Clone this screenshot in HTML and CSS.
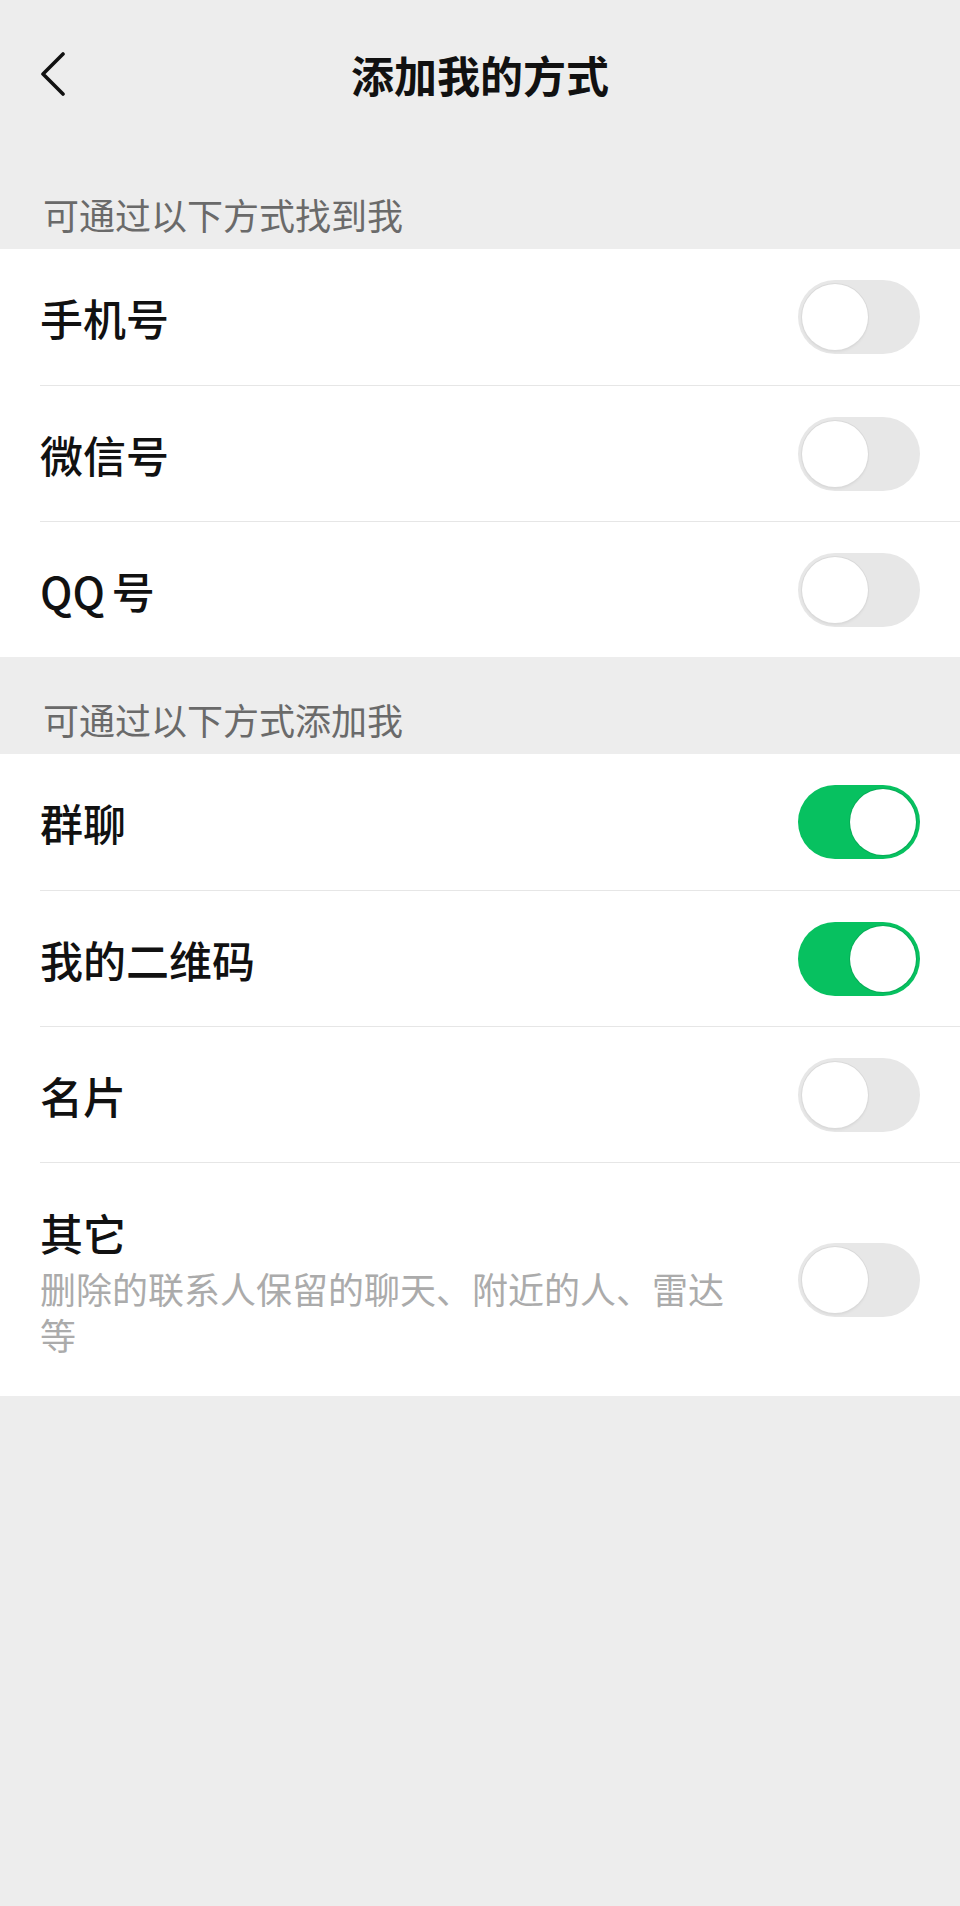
FILE: index.html
```html
<!DOCTYPE html>
<html lang="zh-CN">
<head>
    <meta charset="UTF-8">
    <meta name="viewport" content="width=device-width, initial-scale=1.0">
    <title>添加我的方式</title>
    <link rel="stylesheet" href="styles.css">
</head>
<body>

    <header class="nav-bar">
        <div class="nav-back">
            <svg width="26" height="44" viewBox="0 0 26 44" fill="none">
                <path d="M22 2 L2 22 L22 42" stroke="#111" stroke-width="3.6" stroke-linecap="round" stroke-linejoin="round"/>
            </svg>
        </div>
        <h1 class="nav-title">添加我的方式</h1>
        <div></div>
    </header>

    <div class="section-title">可通过以下方式找到我</div>
    <div class="card">
        <div class="row">
            <span class="label">手机号</span>
            <span class="switch"></span>
        </div>
        <div class="row">
            <span class="label">微信号</span>
            <span class="switch"></span>
        </div>
        <div class="row">
            <span class="label"><span class="latin">QQ</span>号</span>
            <span class="switch"></span>
        </div>
    </div>

    <div class="section-title">可通过以下方式添加我</div>
    <div class="card">
        <div class="row">
            <span class="label">群聊</span>
            <span class="switch on"></span>
        </div>
        <div class="row">
            <span class="label">我的二维码</span>
            <span class="switch on"></span>
        </div>
        <div class="row">
            <span class="label">名片</span>
            <span class="switch"></span>
        </div>
        <div class="row row-tall">
            <div class="row-text">
                <span class="label">其它</span>
                <p class="desc">删除的联系人保留的聊天、附近的人、雷达等</p>
            </div>
            <span class="switch"></span>
        </div>
    </div>

</body>
</html>
```

FILE: styles.css
```css
/* Página geral */
body {
    margin: 0;
    width: 960px;
    min-height: 1906px;
    background: #ededed;
    font-family: "Noto Sans CJK SC", "Noto Sans", sans-serif;
    color: #111;
}

/* Barra superior */
.nav-bar {
    display: grid;
    grid-template-columns: 1fr auto 1fr;
    align-items: center;
    height: 152px;
    padding-bottom: 4px;
    box-sizing: border-box;
}
.nav-back {
    padding-left: 41px;
    display: flex;
    align-items: center;
}
.nav-title {
    margin: 0;
    font-size: 43px;
    font-weight: 700;
    line-height: 1;
    color: #111;
}

/* Títulos das seções */
.section-title {
    height: 97px;
    box-sizing: border-box;
    padding: 39px 40px 0 43px;
    font-size: 36px;
    line-height: 46px;
    color: #6a6a6a;
}

/* Lista */
.card {
    background: #fff;
    padding-left: 40px;
}
.row {
    display: flex;
    align-items: center;
    justify-content: space-between;
    height: 136px;
    box-sizing: border-box;
    padding-right: 40px;
}
.row + .row {
    border-top: 1px solid #e6e6e6;
}
.row-tall {
    height: 234px;
}
.label {
    font-size: 43px;
    font-weight: 500;
    line-height: 58px;
    color: #111;
}
.latin {
    margin-right: 7px;
}
.row-text {
    display: flex;
    flex-direction: column;
    width: 700px;
}
.desc {
    margin: 4px 0 0;
    font-size: 36px;
    line-height: 46px;
    color: #ababab;
}

/* Interruptor */
.switch {
    flex: none;
    display: flex;
    align-items: center;
    width: 122px;
    height: 74px;
    padding: 0 4px;
    box-sizing: border-box;
    border-radius: 37px;
    background: #e7e7e7;
}
.switch::before {
    content: "";
    width: 66px;
    height: 66px;
    border-radius: 50%;
    background: #fff;
    box-shadow: 0 0 0 1px #dadada, 0 2px 3px rgba(0, 0, 0, 0.06);
}
.switch.on {
    background: #07c160;
    justify-content: flex-end;
}
.switch.on::before {
    box-shadow: 0 0 0 1px #06ad56;
}
```
